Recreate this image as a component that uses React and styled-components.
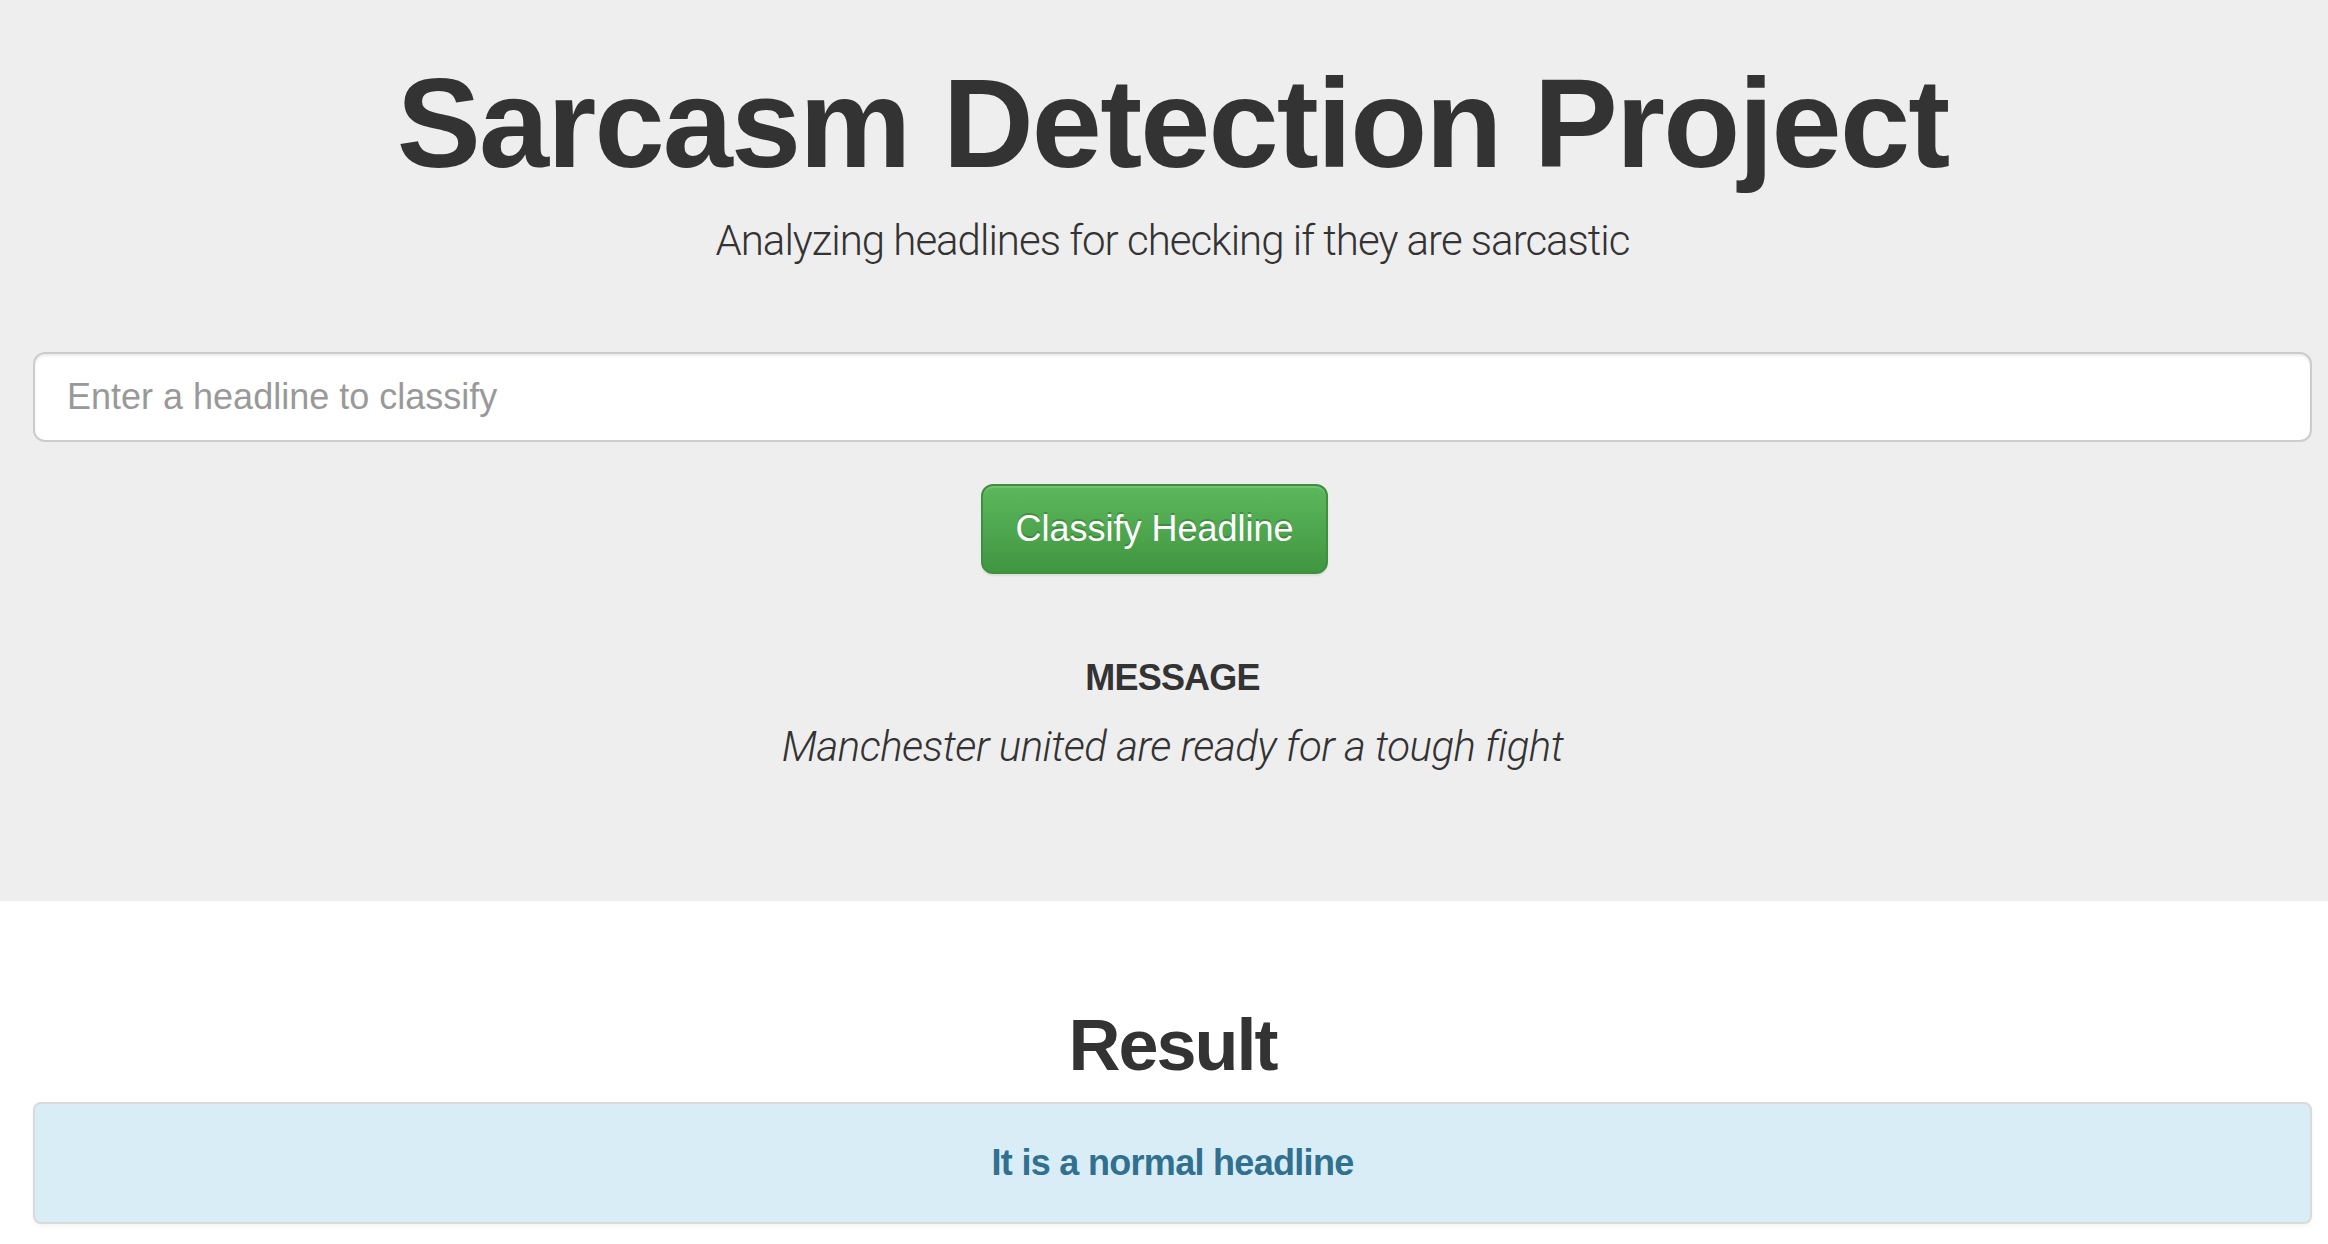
import React from "react";
import styled, { createGlobalStyle } from "styled-components";

const Global = createGlobalStyle`
  html, body {
    margin: 0;
    padding: 0;
    background: #ffffff;
    font-family: "Liberation Sans", Arial, sans-serif;
    color: #333333;
  }
  * { box-sizing: border-box; }
`;

const Jumbotron = styled.header`
  background: #eeeeee;
  padding: 55px 16px 123px 33px;
  display: flex;
  flex-direction: column;
  align-items: stretch;
`;

const Title = styled.h1`
  margin: 0;
  font-family: "Liberation Sans", Arial, sans-serif;
  font-weight: 700;
  font-size: 126px;
  line-height: 138px;
  letter-spacing: -1.8px;
  text-align: center;
  color: #333333;
`;

const Lead = styled.p`
  margin: 16px 0 0;
  font-family: Roboto, "Liberation Sans", sans-serif;
  font-weight: 300;
  font-size: 42px;
  line-height: 63px;
  letter-spacing: ${(p) => (p.$italic ? "-0.5px" : "-1px")};
  text-align: center;
  color: #333333;
  font-style: ${(p) => (p.$italic ? "italic" : "normal")};
`;

const Form = styled.form`
  margin: 80px 0 0;
  display: flex;
  flex-direction: column;
  align-items: center;
  gap: 42px;
`;

const Input = styled.input`
  width: 100%;
  height: 90px;
  padding: 0 32px;
  font-family: "Liberation Sans", Arial, sans-serif;
  font-size: 36px;
  color: #555555;
  background: #ffffff;
  border: 2px solid #cccccc;
  border-radius: 12px;
  box-shadow: inset 0 2px 2px rgba(0, 0, 0, 0.075);
  outline: none;
  &::placeholder {
    color: #999999;
  }
`;

const Button = styled.button`
  height: 90px;
  margin-right: 36px;
  padding: 0 32px;
  font-family: "Liberation Sans", Arial, sans-serif;
  font-size: 36px;
  line-height: 86px;
  color: #ffffff;
  text-shadow: 0 -2px 0 rgba(0, 0, 0, 0.2);
  background: linear-gradient(to bottom, #5cb85c 0%, #419641 100%);
  border: 2px solid #3e8f3e;
  border-radius: 12px;
  box-shadow: inset 0 2px 0 rgba(255, 255, 255, 0.15),
    0 2px 2px rgba(0, 0, 0, 0.075);
  cursor: pointer;
`;

const MessageLabel = styled.h4`
  margin: 84px 0 0;
  font-family: "Liberation Sans", Arial, sans-serif;
  font-weight: 700;
  font-size: 36px;
  line-height: 40px;
  letter-spacing: -0.8px;
  text-align: center;
  color: #333333;
`;

const MessageText = styled(Lead)`
  margin-top: 17px;
`;

const Section = styled.section`
  padding: 104px 16px 20px 33px;
  display: flex;
  flex-direction: column;
`;

const ResultTitle = styled.h1`
  margin: 0;
  font-family: "Liberation Sans", Arial, sans-serif;
  font-weight: 700;
  font-size: 72px;
  line-height: 80px;
  letter-spacing: -2px;
  text-align: center;
  color: #333333;
`;

const Alert = styled.div`
  margin-top: 17px;
  height: 122px;
  background: #d9edf7;
  border: 2px solid #dadada;
  border-radius: 8px;
  box-shadow: 0 2px 4px rgba(0, 0, 0, 0.05);
  display: flex;
  align-items: center;
  justify-content: center;
`;

const AlertText = styled.strong`
  font-family: "Liberation Sans", Arial, sans-serif;
  font-weight: 700;
  font-size: 36px;
  line-height: 40px;
  letter-spacing: -0.7px;
  color: #31708f;
`;

export default function App() {
  return (
    <>
      <Global />
      <Jumbotron>
        <Title>Sarcasm Detection Project</Title>
        <Lead>Analyzing headlines for checking if they are sarcastic</Lead>
        <Form onSubmit={(e) => e.preventDefault()}>
          <Input type="text" placeholder="Enter a headline to classify" />
          <Button type="submit">Classify Headline</Button>
        </Form>
        <MessageLabel>MESSAGE</MessageLabel>
        <MessageText $italic>Manchester united are ready for a tough fight</MessageText>
      </Jumbotron>
      <Section>
        <ResultTitle>Result</ResultTitle>
        <Alert>
          <AlertText>It is a normal headline</AlertText>
        </Alert>
      </Section>
    </>
  );
}
